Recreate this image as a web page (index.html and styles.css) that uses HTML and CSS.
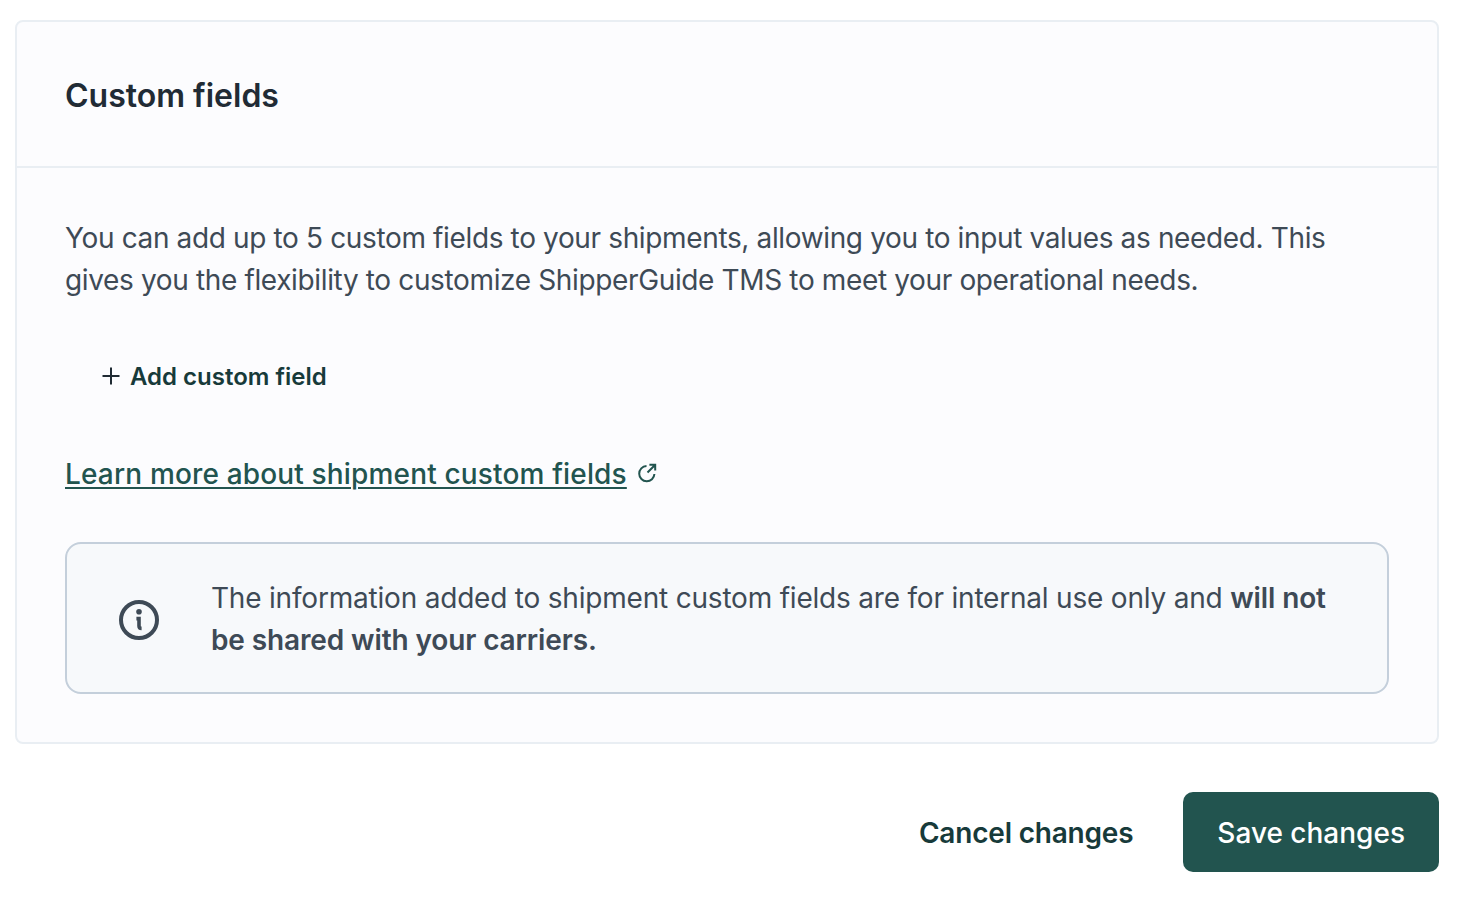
FILE: index.html
```html
<!DOCTYPE html>
<html lang="en">
<head>
<meta charset="utf-8">
<title>Custom fields</title>
<link rel="stylesheet" href="styles.css">
</head>
<body>
<main class="page">
  <section class="card">
    <header class="card-header"><h2 class="card-title">Custom fields</h2></header>
    <div class="card-body">
      <p class="intro">You can add up to 5 custom fields to your shipments, allowing you to input values as needed. This gives you the flexibility to customize ShipperGuide TMS to meet your operational needs.</p>
      <button class="add-btn" type="button">
        <svg class="plus-icon" viewBox="0 0 20 20" width="20" height="20" aria-hidden="true"><path d="M10 1.5v17M1.5 10h17" fill="none" stroke="#1f2a33" stroke-width="2"/></svg>
        <span>Add custom field</span>
      </button>
      <div class="learn-row">
        <a class="learn-link" href="#">Learn more about shipment custom fields</a>
        <svg class="ext-icon" viewBox="0 0 20 20" width="20" height="20" aria-hidden="true"><path d="M9.5 3A7.6 7.6 0 1 0 17.4 11M10.5 9.5 18 2M12.4 1.8h5.8v5.8" fill="none" stroke="#22544f" stroke-width="2"/></svg>
      </div>
      <div class="notice">
        <svg class="info-icon" viewBox="0 0 40 40" width="40" height="40" aria-hidden="true">
          <circle cx="20" cy="20" r="18" fill="none" stroke="#3e4a56" stroke-width="4"/>
          <circle cx="20" cy="11.8" r="2.8" fill="#3e4a56"/>
          <path d="M17.4 18.6H20V26c0 1.6.8 2.4 2.6 2.4" fill="none" stroke="#3e4a56" stroke-width="3.6"/>
        </svg>
        <p class="notice-text">The information added to shipment custom fields are for internal use only and <strong>will not be shared with your carriers.</strong></p>
      </div>
    </div>
  </section>
  <footer class="actions">
    <button class="btn btn-text" type="button">Cancel changes</button>
    <button class="btn btn-primary" type="button">Save changes</button>
  </footer>
</main>
</body>
</html>
```
FILE: styles.css
```css
* { box-sizing: border-box; }
html, body { margin: 0; padding: 0; background: #fff; }
body {
  font-family: "Inter", "Noto Sans", sans-serif;
  color: #3e4a56;
  -webkit-font-smoothing: antialiased;
}
.page { padding: 20px 35px 26px 15px; }
.card {
  background: #fcfcfe;
  border: 2px solid #e9eef3;
  border-radius: 8px;
}
.card-header {
  height: 146px;
  border-bottom: 2px solid #e9eef3;
  display: flex;
  align-items: center;
  padding: 2px 48px 0;
}
.card-title {
  margin: 0;
  font-size: 32px;
  font-weight: 600;
  letter-spacing: 0;
  color: #212b35;
}
.card-body { padding: 49px 48px 48px; }
.intro {
  margin: 0;
  font-size: 28px;
  line-height: 42px;
  letter-spacing: -0.36px;
}
.add-btn {
  display: flex;
  align-items: center;
  gap: 9px;
  margin: 53px 0 0 36px;
  padding: 0;
  height: 44px;
  border: 0;
  background: none;
  font: inherit;
  font-size: 24px;
  font-weight: 600;
  color: #173a3a;
}
.learn-row {
  display: flex;
  align-items: center;
  gap: 10px;
  margin-top: 55px;
}
.learn-link {
  font-size: 28px;
  line-height: 42px;
  font-weight: 500;
  letter-spacing: 0.16px;
  color: #22544f;
  text-decoration: underline;
  text-underline-offset: 3px;
  text-decoration-thickness: 2px;
}
.ext-icon { margin-bottom: 2px; }
.notice {
  display: flex;
  align-items: center;
  gap: 52px;
  margin-top: 47px;
  padding: 33px 50px 31px 52px;
  background: #f7f9fb;
  border: 2px solid #c4cfdb;
  border-radius: 16px;
}
.info-icon { flex: none; margin-top: 2px; }
.notice-text {
  margin: 0;
  font-size: 28px;
  line-height: 42px;
  letter-spacing: -0.2px;
}
.notice-text strong { font-weight: 600; letter-spacing: -0.12px; }
.actions {
  display: flex;
  justify-content: flex-end;
  align-items: center;
  gap: 16px;
  margin-top: 48px;
}
.btn {
  height: 80px;
  border: 0;
  border-radius: 10px;
  font: inherit;
  font-size: 28px;
  font-weight: 500;
  padding: 2px 34px 0;
}
.btn-text { background: none; color: #173a3a; font-weight: 600; letter-spacing: -0.2px; }
.btn-primary { background: #22544f; color: #fff; }
```
